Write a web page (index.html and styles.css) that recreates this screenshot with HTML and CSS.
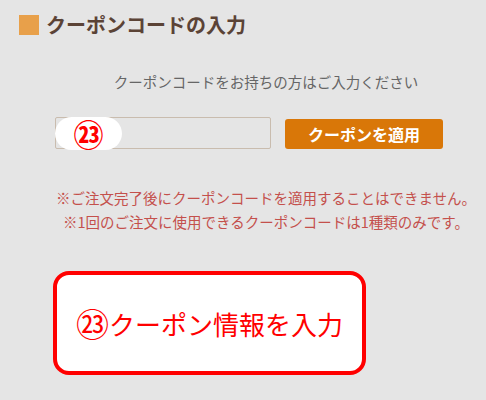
FILE: index.html
```html
<!DOCTYPE html>
<html lang="ja">
<head>
    <meta charset="UTF-8">
    <meta name="viewport" content="width=device-width, initial-scale=1.0">
    <title>クーポンコードの入力</title>
    <link rel="stylesheet" href="styles.css">
</head>
<body>
    <h2 class="heading"><span class="heading-mark"></span>クーポンコードの入力</h2>

    <div class="coupon">
        <p class="lead">クーポンコードをお持ちの方はご入力ください</p>

        <div class="coupon-form">
            <div class="coupon-field">
                <input type="text" class="coupon-input">
                <span class="marker">㉓</span>
            </div>
            <button class="coupon-btn">クーポンを適用</button>
        </div>

        <div class="notes">
            <p>※ご注文完了後にクーポンコードを適用することはできません。</p>
            <p>※1回のご注文に使用できるクーポンコードは1種類のみです。</p>
        </div>
    </div>

    <div class="callout"><span class="callout-num">㉓</span>クーポン情報を入力</div>
</body>
</html>
```

FILE: styles.css
```css
body {
    margin: 0;
    background-color: #e5e5e5;
    font-family: "Noto Sans CJK JP", "Noto Sans", sans-serif;
    width: 486px;
    height: 400px;
    overflow: hidden;
}
.heading {
    display: flex;
    align-items: center;
    gap: 7px;
    margin: 0;
    padding: 12px 0 0 19px;
    height: 25px;
    font-size: 20px;
    font-weight: bold;
    color: #5b4336;
    line-height: 25px;
}
.heading-mark {
    width: 20px;
    height: 20px;
    background-color: #e8a04a;
}
.coupon {
    margin-left: 46px;
}
.lead {
    margin: 0;
    padding-top: 34px;
    text-align: center;
    font-size: 14.5px;
    line-height: 22px;
    color: #666;
}
.coupon-form {
    display: flex;
    align-items: flex-end;
    gap: 14px;
    margin: 24px 0 0 9px;
}
.coupon-field {
    position: relative;
    width: 216px;
    height: 32px;
}
.coupon-input {
    box-sizing: border-box;
    width: 100%;
    height: 100%;
    border: 1px solid #c9bcae;
    background-color: #e5e5e5;
    border-radius: 2px;
}
.marker {
    position: absolute;
    left: 0;
    top: 0;
    width: 67px;
    height: 33px;
    border-radius: 17px;
    background-color: #fff;
    color: #f00;
    font-size: 30px;
    font-weight: bold;
    line-height: 33px;
    text-align: center;
}
.coupon-btn {
    width: 158px;
    height: 30px;
    border: none;
    border-radius: 3px;
    background-color: #d97708;
    color: #fff;
    font-family: inherit;
    font-size: 16px;
    font-weight: bold;
    padding: 0;
}
.notes {
    margin-top: 37px;
    text-align: center;
    color: #c4504c;
    font-size: 14.5px;
    line-height: 24px;
}
.notes p {
    margin: 0;
}
.callout {
    box-sizing: border-box;
    width: 313px;
    height: 104px;
    margin: 37px 0 0 53px;
    border: 4px solid #f00;
    border-radius: 16px;
    background-color: #fff;
    color: #f00;
    font-size: 26px;
    display: flex;
    align-items: center;
    justify-content: center;
}
.callout-num {
    font-size: 33px;
    line-height: 1;
}
```
